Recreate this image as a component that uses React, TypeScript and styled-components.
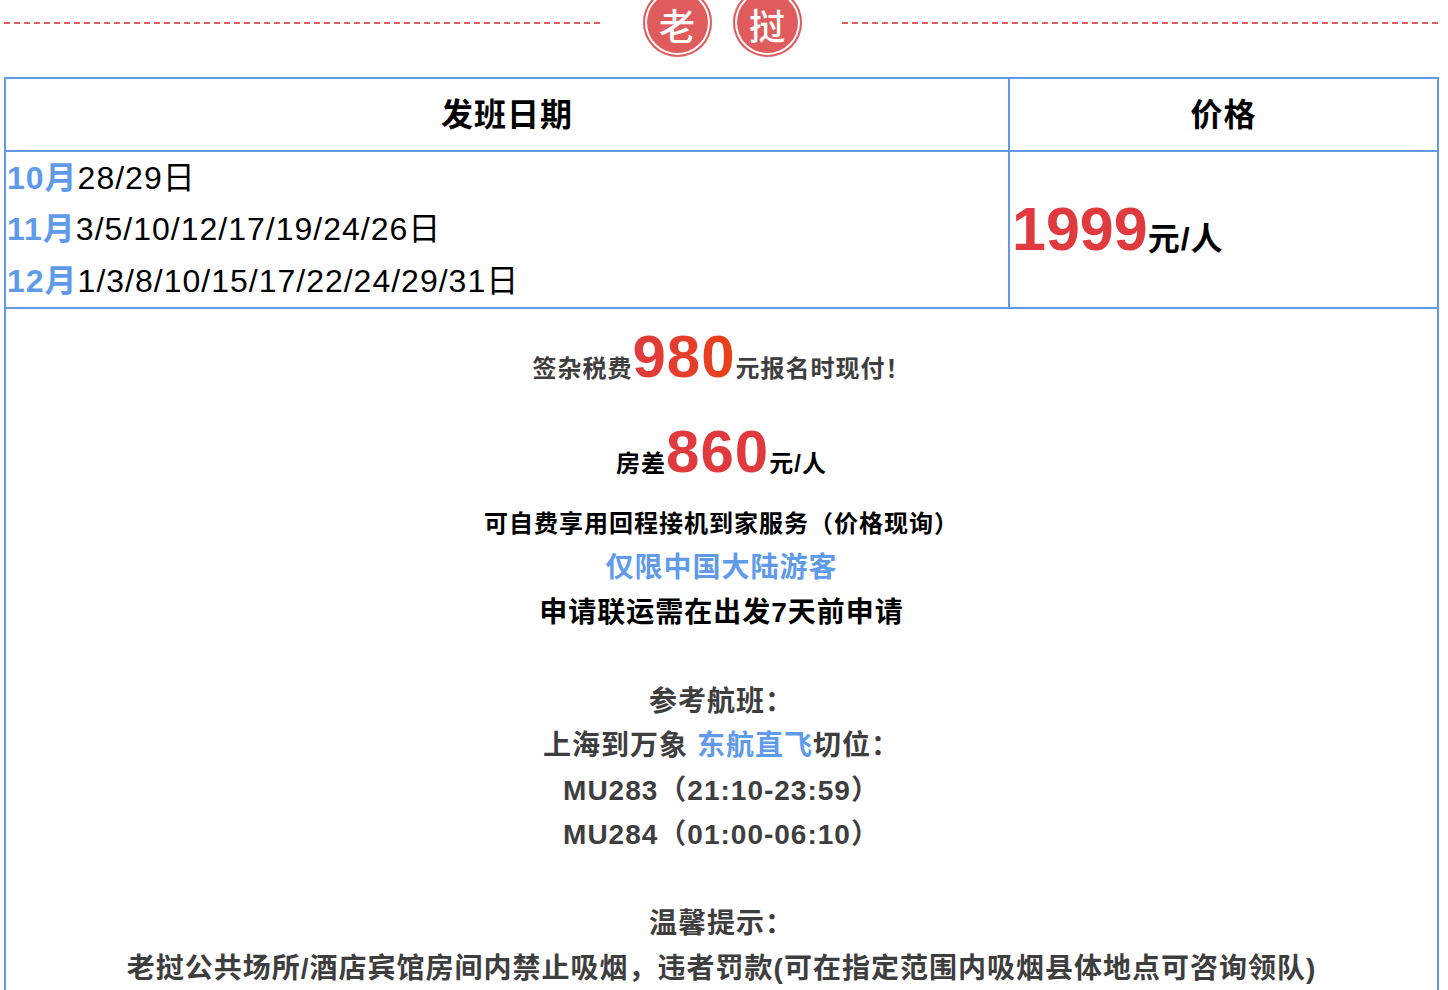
import React from "react";
import styled, { createGlobalStyle } from "styled-components";

const GlobalStyle = createGlobalStyle`
  html, body { margin: 0; padding: 0; background: #fff; }
  body {
    font-family: "Liberation Sans", "Noto Sans CJK SC", sans-serif;
    color: #000;
    letter-spacing: 1px;
    overflow: hidden;
  }
`;

const RED = "#e05b5b";
const BLUE = "#5f9bea";
const LINE = "#6499e9";
const PRICE = "#e0393e";
const GRAY = "#3e3e3e";

const Page = styled.div`
  width: 1436px;
  margin: 0 8px 0 4px;
`;

const Banner = styled.div`
  display: flex;
  align-items: center;
  height: 69px;
  margin-top: -12px;
  margin-bottom: 20px;
`;

const Dash = styled.div`
  flex: 1;
  height: 2px;
  background-image: linear-gradient(to right, ${RED} 6px, transparent 6px);
  background-size: 10px 2px;
  background-repeat: repeat-x;
`;

const Badges = styled.div`
  display: flex;
  gap: 21px;
  margin: 0 40px;
`;

const Badge = styled.div`
  width: 69px;
  height: 69px;
  border-radius: 50%;
  background: ${RED};
  box-shadow: inset 0 0 0 2px ${RED}, inset 0 0 0 4px #fff;
  color: #fff;
  display: flex;
  align-items: center;
  justify-content: center;
  font-family: "Noto Sans CJK SC", sans-serif;
  font-size: 36px;
  font-weight: 500;
  letter-spacing: 0;
  line-height: 1;
  padding-top: 3px;
  box-sizing: border-box;
`;

const Table = styled.table`
  width: 1435px;
  border-collapse: collapse;
  border: 2px solid ${LINE};
  table-layout: fixed;
`;

const HeadCell = styled.th<{ $w?: number }>`
  ${(p) => (p.$w ? `width: ${p.$w}px;` : "")}
  height: 73px;
  border: 2px solid ${LINE};
  font-size: 32px;
  font-weight: 700;
  text-align: center;
  padding: 0 0 5px;
  box-sizing: border-box;
`;

const DateCell = styled.td`
  border: 2px solid ${LINE};
  padding: 1px 0 0 1px;
  vertical-align: top;
  font-size: 32px;
  line-height: 51.3px;
`;

const DateLine = styled.div``;

const Month = styled.span`
  color: ${BLUE};
  font-weight: 700;
`;

const PriceCell = styled.td`
  border: 2px solid ${LINE};
  padding: 0 0 0 2px;
  vertical-align: middle;
`;

const BigPrice = styled.span`
  color: ${PRICE};
  font-size: 61px;
  font-weight: 700;
  letter-spacing: 0;
`;

const Unit = styled.span`
  font-size: 32px;
  font-weight: 700;
`;

const InfoCell = styled.td`
  border: 2px solid ${LINE};
  border-bottom: none;
  padding: 0 0 40px;
  text-align: center;
  vertical-align: top;
`;

const BigLine = styled.div<{ $extra?: number }>`
  line-height: 95px;
  height: 95px;
  margin-bottom: ${(p) => p.$extra || 0}px;
  font-weight: 700;
  font-size: 24px;
`;

const Small = styled.span<{ $c?: string }>`
  font-size: 24px;
  font-weight: 700;
  color: ${(p) => p.$c || "#000"};
`;

const Figure = styled.span<{ $grad?: boolean }>`
  font-size: 60px;
  font-weight: 700;
  color: ${PRICE};
  ${(p) =>
    p.$grad
      ? `background: linear-gradient(to right, #df3a40, #ea4217);
         -webkit-background-clip: text;
         background-clip: text;
         color: transparent;`
      : ""}
`;

const Text = styled.div<{ $size: number; $c?: string }>`
  font-size: ${(p) => p.$size}px;
  font-weight: 700;
  line-height: 44.5px;
  color: ${(p) => p.$c || "#000"};
`;

const Blue = styled.span`
  color: ${BLUE};
`;

const Gap = styled.div`
  height: 44.5px;
`;

export default function App() {
  return (
    <>
      <GlobalStyle />
      <Page>
        <Banner>
          <Dash />
          <Badges>
            <Badge>老</Badge>
            <Badge>挝</Badge>
          </Badges>
          <Dash />
        </Banner>
        <Table>
          <thead>
            <tr>
              <HeadCell $w={1004}>发班日期</HeadCell>
              <HeadCell>价格</HeadCell>
            </tr>
          </thead>
          <tbody>
            <tr>
              <DateCell>
                <DateLine>
                  <Month>10月</Month>28/29日
                </DateLine>
                <DateLine>
                  <Month>11月</Month>3/5/10/12/17/19/24/26日
                </DateLine>
                <DateLine>
                  <Month>12月</Month>1/3/8/10/15/17/22/24/29/31日
                </DateLine>
              </DateCell>
              <PriceCell>
                <BigPrice>1999</BigPrice>
                <Unit>元/人</Unit>
              </PriceCell>
            </tr>
            <tr>
              <InfoCell colSpan={2}>
                <BigLine>
                  <Small $c={GRAY}>签杂税费</Small>
                  <Figure $grad>980</Figure>
                  <Small $c={GRAY}>元报名时现付！</Small>
                </BigLine>
                <BigLine $extra={3}>
                  <Small>房差</Small>
                  <Figure>860</Figure>
                  <Small>元/人</Small>
                </BigLine>
                <Text $size={24}>可自费享用回程接机到家服务（价格现询）</Text>
                <Text $size={28} $c={BLUE}>
                  仅限中国大陆游客
                </Text>
                <Text $size={28}>申请联运需在出发7天前申请</Text>
                <Gap />
                <Text $size={28} $c={GRAY}>
                  参考航班：
                </Text>
                <Text $size={28} $c={GRAY}>
                  上海到万象 <Blue>东航直飞</Blue>切位：
                </Text>
                <Text $size={28} $c={GRAY}>
                  MU283（21:10-23:59）
                </Text>
                <Text $size={28} $c={GRAY}>
                  MU284（01:00-06:10）
                </Text>
                <Gap />
                <Text $size={28} $c={GRAY}>
                  温馨提示：
                </Text>
                <Text $size={28} $c={GRAY}>
                  老挝公共场所/酒店宾馆房间内禁止吸烟，违者罚款(可在指定范围内吸烟县体地点可咨询领队)
                </Text>
              </InfoCell>
            </tr>
          </tbody>
        </Table>
      </Page>
    </>
  );
}
